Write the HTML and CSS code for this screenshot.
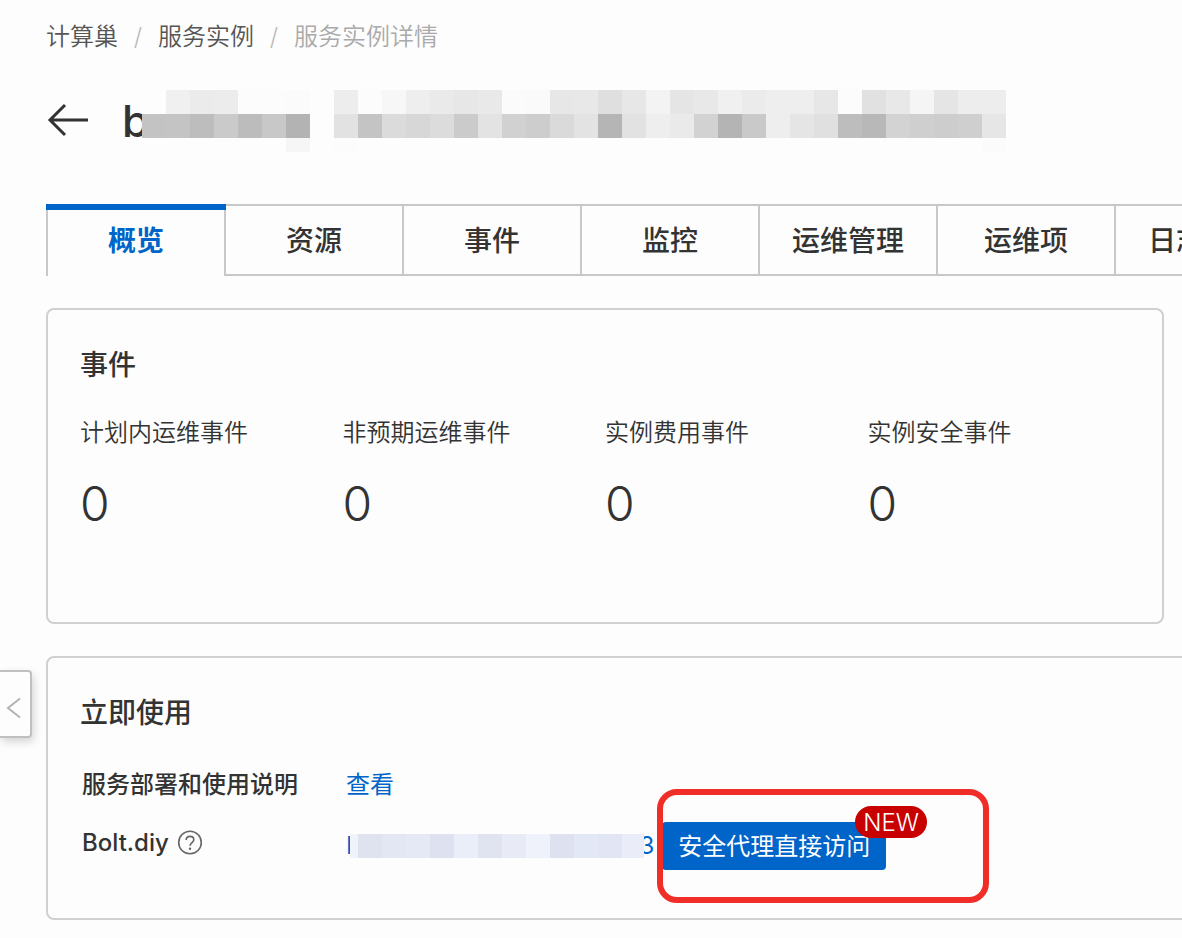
FILE: index.html
```html
<!DOCTYPE html>
<html lang="zh-CN">
<head>
    <meta charset="UTF-8">
    <meta name="viewport" content="width=device-width, initial-scale=1.0">
    <title>服务实例详情</title>
    <link rel="stylesheet" href="styles.css">
</head>
<body>

<button type="button" class="side-handle" aria-label="展开">
    <svg width="16" height="22" viewBox="0 0 16 22"><path d="M15 1.5 3 11l12 9.5" fill="none" stroke="#b3b3b3" stroke-width="2"/></svg>
</button>

<div class="page">
    <nav class="breadcrumb">
        <a href="#">计算巢</a>
        <span class="slash">/</span>
        <a href="#">服务实例</a>
        <span class="slash">/</span>
        <span class="current">服务实例详情</span>
    </nav>

    <header class="page-header">
        <a href="#" class="back" aria-label="返回">
            <svg width="42" height="36" viewBox="0 0 42 36"><path d="M42 18H4M19 3 4 18l15 15" fill="none" stroke="#333" stroke-width="3"/></svg>
        </a>
        <h1>b</h1>
        <!-- masked instance name -->
        <svg class="name-mask" width="864" height="62" viewBox="0 0 864 62" shape-rendering="crispEdges"></svg>
    </header>

    <div class="tabs" role="tablist">
        <button type="button" role="tab" class="tab active" aria-selected="true">概览</button>
        <button type="button" role="tab" class="tab">资源</button>
        <button type="button" role="tab" class="tab">事件</button>
        <button type="button" role="tab" class="tab">监控</button>
        <button type="button" role="tab" class="tab">运维管理</button>
        <button type="button" role="tab" class="tab">运维项</button>
        <button type="button" role="tab" class="tab">日志管理</button>
    </div>

    <section class="card events">
        <h2>事件</h2>
        <dl class="event-grid">
            <div><dt>计划内运维事件</dt><dd>0</dd></div>
            <div><dt>非预期运维事件</dt><dd>0</dd></div>
            <div><dt>实例费用事件</dt><dd>0</dd></div>
            <div><dt>实例安全事件</dt><dd>0</dd></div>
        </dl>
    </section>

    <section class="card usage">
        <h2>立即使用</h2>
        <div class="row">
            <div class="row-label">服务部署和使用说明</div>
            <a href="#">查看</a>
        </div>
        <div class="row">
            <div class="row-label">
                Bolt.diy
                <svg width="26" height="26" viewBox="0 0 26 26" fill="none" stroke="#666">
                    <circle cx="13" cy="12.5" r="11.3" stroke-width="1.6"/>
                    <path d="M9.2 10.1c0-2.2 1.6-3.7 3.8-3.7s3.8 1.4 3.8 3.4c0 2.6-3.8 2.9-3.8 6" stroke-width="1.6"/>
                    <circle cx="13" cy="18.8" r="1.2" fill="#666" stroke="none"/>
                </svg>
            </div>
            <a href="#" class="address">I<svg class="url-mask" width="294" height="24" viewBox="0 0 294 24" shape-rendering="crispEdges"></svg>3</a>
            <div class="access">
                <button type="button" class="access-button">安全代理直接访问</button>
                <span class="badge">NEW</span>
                <span class="highlight"></span>
            </div>
        </div>
    </section>
</div>

<script src="mask.js"></script>
</body>
</html>
```
FILE: styles.css
```css
* {
    box-sizing: border-box;
}

body {
    margin: 0;
    background-color: #fdfdfd;
    color: #333;
    font-family: Inter, "Noto Sans CJK SC", sans-serif;
    font-size: 24px;
    line-height: 36px;
    overflow: hidden;
}

a {
    color: #0064c8;
    text-decoration: none;
}

button {
    font: inherit;
    cursor: pointer;
}

svg {
    display: block;
    flex-shrink: 0;
}

h1, h2, dl, dd {
    margin: 0;
}

.page {
    padding: 19px 18px 18px 46px;
}

.breadcrumb {
    display: flex;
    gap: 15px;
    font-weight: 350;
}

.breadcrumb a {
    color: #555;
}

.breadcrumb .slash {
    width: 10px;
    color: #bbb;
    text-align: center;
}

.breadcrumb .current {
    color: #aaa;
}

/* Title row */
.page-header {
    display: flex;
    align-items: flex-start;
    margin-top: 35px;
    margin-bottom: 52px;
}

.back {
    margin-top: 12px;
    margin-right: 34px;
}

.page-header h1 {
    width: 20px;
    font-size: 44px;
    line-height: 62px;
    font-weight: 500;
    white-space: nowrap;
}

.name-mask {
    position: relative;
}

/* Tabs */
.tabs {
    display: flex;
    margin-bottom: 32px;
}

.tab {
    flex: 0 0 180px;
    height: 72px;
    padding: 2px 0 0;
    border: 2px solid #c8c8c8;
    background-color: #fdfdfd;
    color: #333;
    font-size: 28px;
    font-weight: 500;
}

.tab + .tab {
    margin-left: -2px;
}

.tab.active {
    position: relative;
    border-top: 0;
    border-bottom: 0;
    color: #0064c8;
    font-weight: 700;
}

.tab.active::before {
    content: "";
    position: absolute;
    top: 0;
    left: -2px;
    right: -2px;
    height: 6px;
    background-color: #0064c8;
}

/* Cards */
.card {
    padding: 35px 32px 48px;
    border: 2px solid #d0d0d0;
    border-radius: 8px;
}

.card h2 {
    font-size: 28px;
    line-height: 40px;
    font-weight: 500;
}

.events {
    margin-bottom: 32px;
    padding-bottom: 82px;
}

.event-grid {
    display: grid;
    grid-template-columns: repeat(4, 1fr);
    margin-top: 30px;
}

.event-grid dt {
    font-weight: 350;
}

.event-grid dd {
    margin-top: 17px;
    font-size: 48px;
    line-height: 72px;
    font-weight: 350;
}

/* The usage card runs past the right edge of the window */
.usage {
    margin-right: -40px;
}

.row {
    display: flex;
    align-items: center;
    margin-top: 16px;
}

.card h2 + .row {
    margin-top: 31px;
}

.row-label {
    display: flex;
    align-items: center;
    align-self: flex-start;
    gap: 8px;
    flex: 0 0 266px;
    padding-left: 2px;
    line-height: 42px;
    font-weight: 450;
}

.address {
    display: flex;
    align-items: center;
}

.url-mask {
    position: relative;
    margin-left: -2px;
    margin-right: -5px;
}

.access {
    position: relative;
    margin-left: 8px;
}

.access-button {
    display: block;
    height: 48px;
    padding: 2px 16px 0;
    border: 0;
    border-radius: 4px;
    background-color: #0064c8;
    color: #fff;
}

.badge {
    position: absolute;
    top: -16px;
    left: calc(100% - 31px);
    height: 32px;
    padding: 0 8px;
    border-radius: 16px;
    background-color: #c80000;
    color: #fff;
    line-height: 34px;
    font-weight: 300;
}

.highlight {
    position: absolute;
    top: -33px;
    right: -103px;
    bottom: -33px;
    left: -5px;
    border: 6px solid #f02d26;
    border-radius: 20px;
    pointer-events: none;
}

/* Drawer handle on the left edge of the window */
.side-handle {
    position: fixed;
    top: 670px;
    left: 0;
    width: 32px;
    height: 68px;
    padding: 8px 0 0 5px;
    border: 2px solid #c0c0c0;
    border-left: 0;
    border-radius: 0 4px 4px 0;
    background-color: #fdfdfd;
    box-shadow: 2px 4px 8px rgba(0, 0, 0, 0.16);
}
```
FILE: mask.js
```javascript
// Each mask is a grid of 24px cells, given as one list of colours per row
function drawMask(selector, rows, offset) {
    const svg = document.querySelector(selector);
    rows.forEach(function(row, y) {
        row.split(' ').forEach(function(color, x) {
            if (color === '-') return;
            const rect = document.createElementNS('http://www.w3.org/2000/svg', 'rect');
            rect.setAttribute('x', offset + x * 24);
            rect.setAttribute('y', y * 24);
            rect.setAttribute('width', 24);
            rect.setAttribute('height', 24);
            rect.setAttribute('fill', '#' + (color.length === 2 ? color + color + color : color));
            svg.appendChild(rect);
        });
    });
}

drawMask('.name-mask', [
    '- f0 eb ec fc fc fb - ed fc f7 ee ea e7 e9 fb fa e7 e8 df e7 f3 e5 e8 f0 eb ee ee e7 fc e1 e8 f5 e5 ed ed',
    'c3 c4 bd ca bc c8 b3 - e2 c4 db d7 dc cb e3 d1 cd da e3 b5 e2 ee ea d2 b4 c9 ee e5 e0 bd b8 d3 cf cd cf e6',
    '- - - - - - f6 - fc - - - - - - - - - - - - - - - - - - - - - - - - - - fb'
], 0);

drawMask('.url-mask', [
    'f0f3fa dfe3f0 e3e7f4 e5e9f5 dee2f0 eaeef9 e0e4f1 e8ebf6 eff2fa dde1f0 e3e8f6 e2e6f4 eaedf7'
], -16);
```
